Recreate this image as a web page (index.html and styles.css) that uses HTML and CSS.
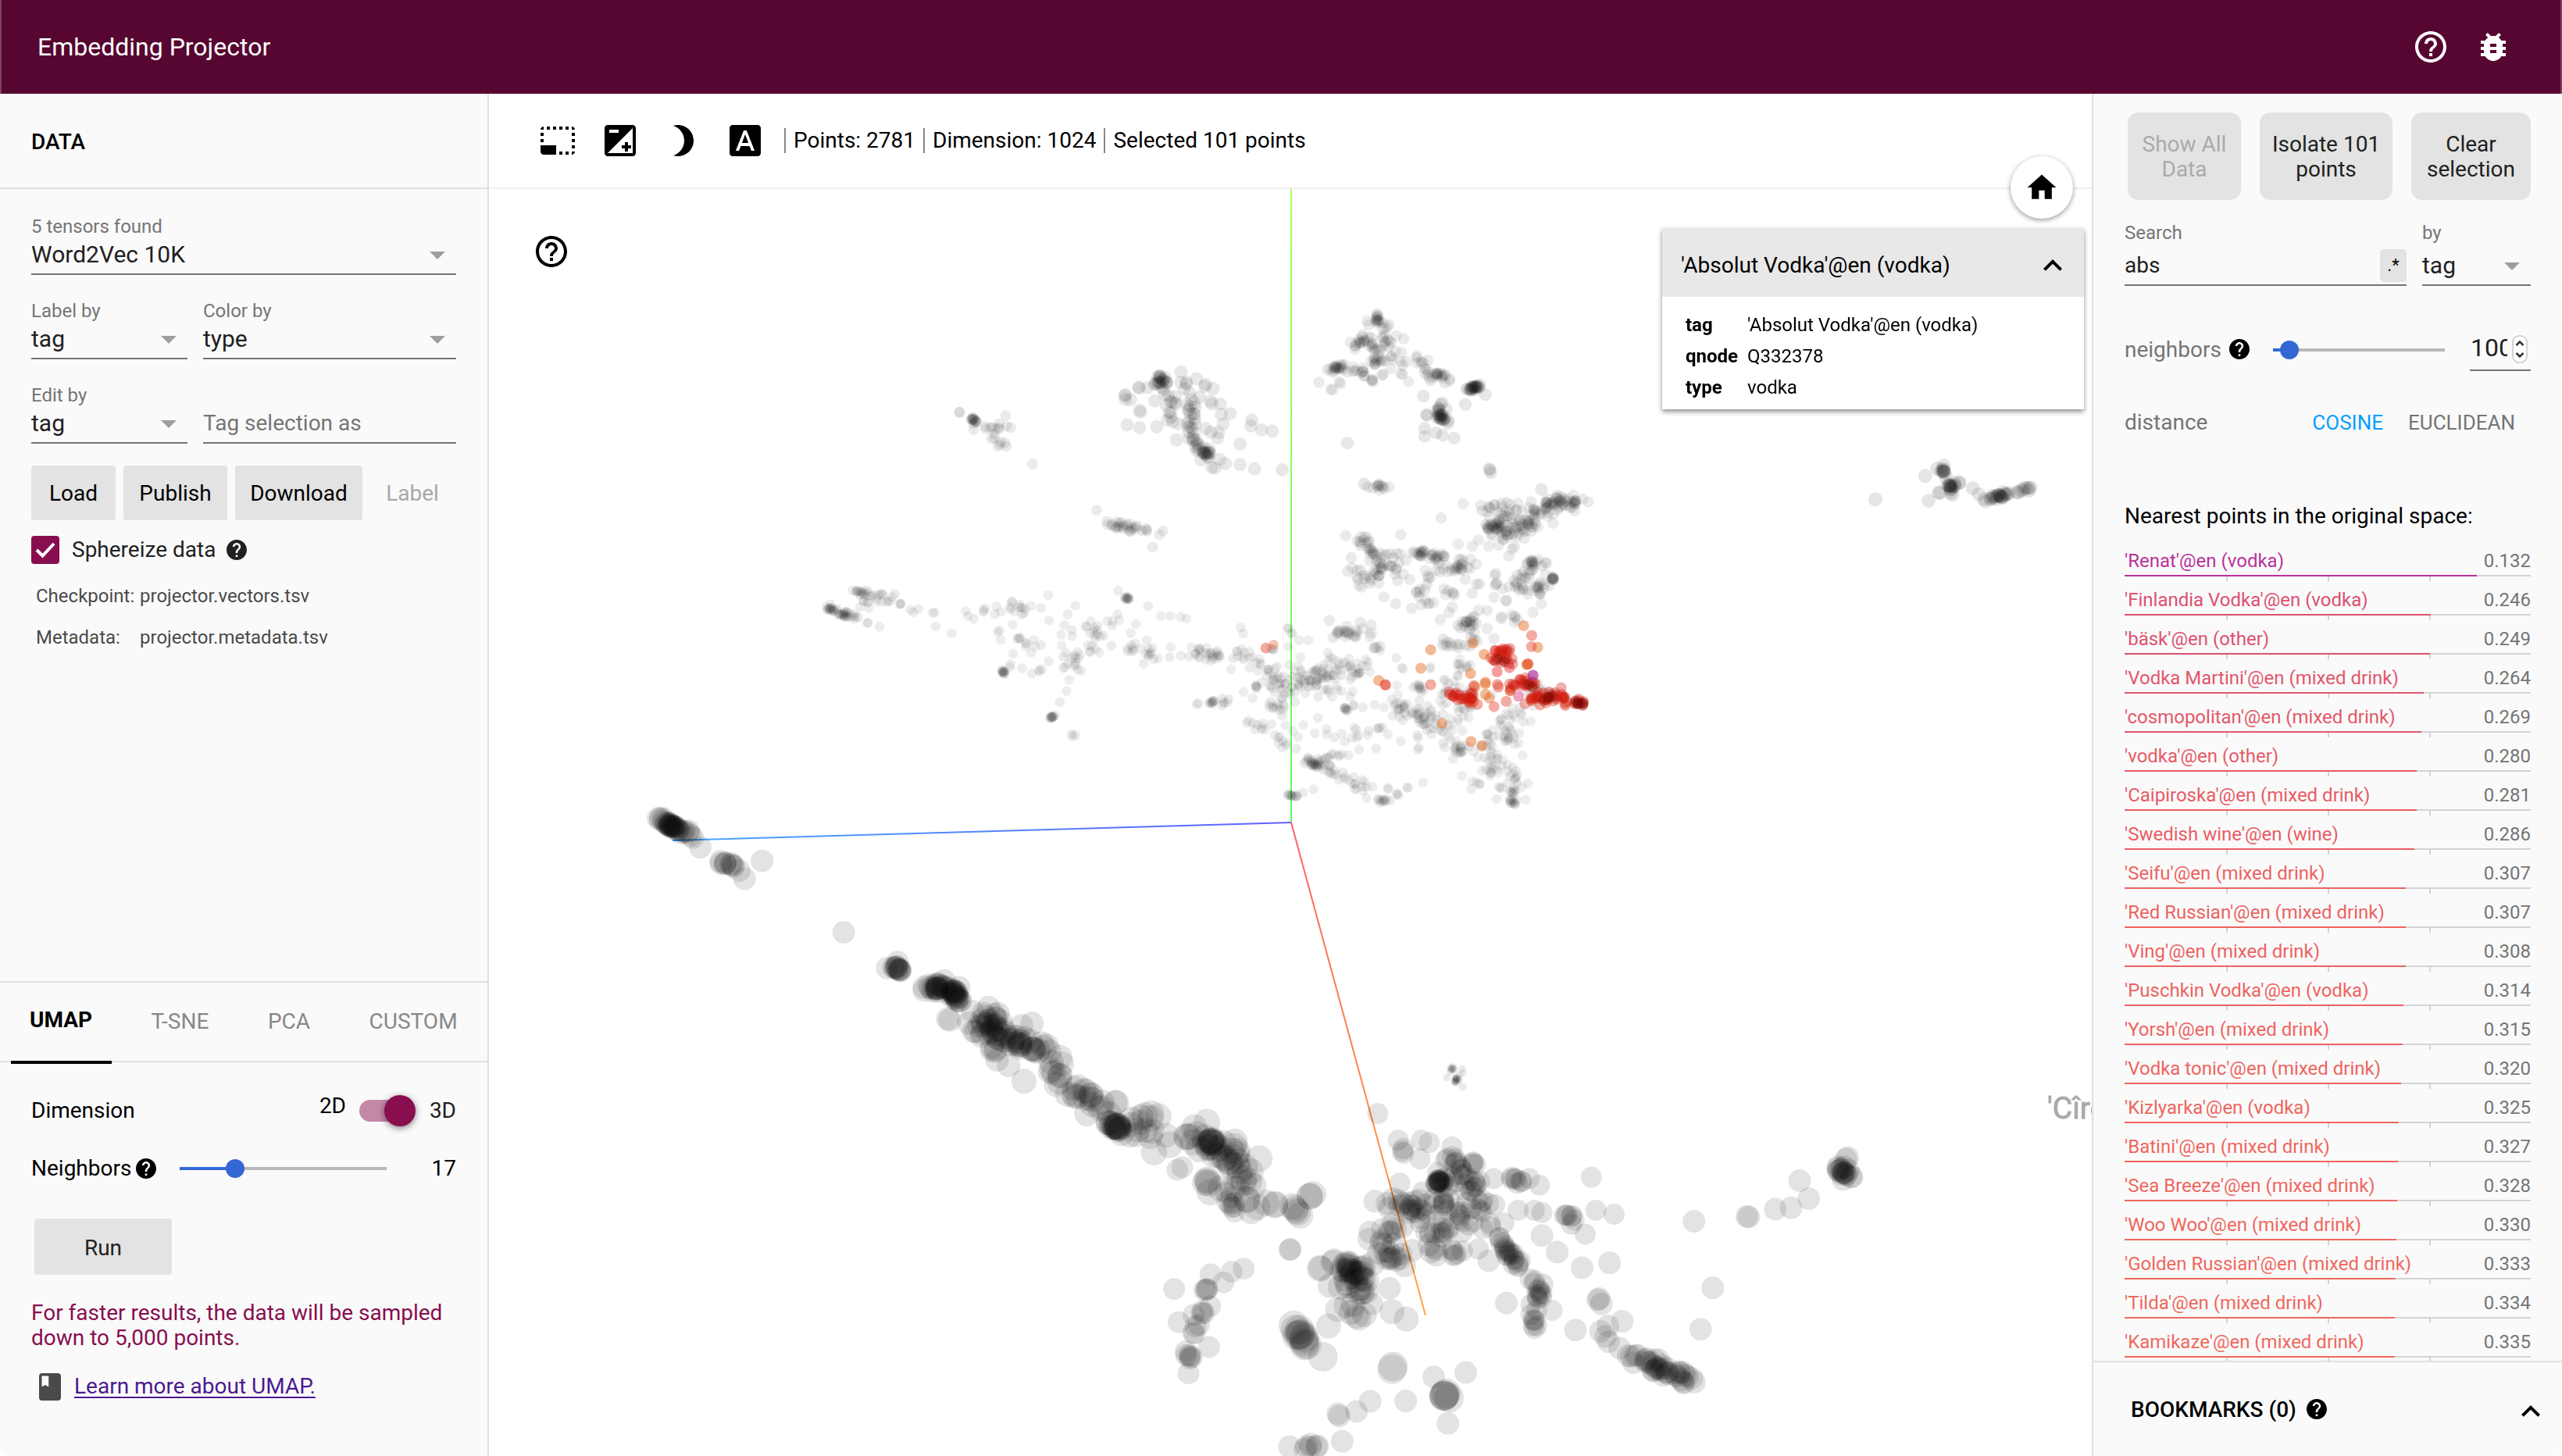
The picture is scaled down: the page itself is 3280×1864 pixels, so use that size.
FILE: index.html
```html
<!DOCTYPE html>
<html lang="en">
<head>
<meta charset="utf-8">
<title>Embedding Projector</title>
<link rel="stylesheet" href="styles.css">
</head>
<body>
<svg class="defs" aria-hidden="true">
  <symbol id="help-solid" viewBox="2 2 20 20"><path d="M12 2C6.48 2 2 6.48 2 12s4.48 10 10 10 10-4.48 10-10S17.52 2 12 2zm1 17h-2v-2h2v2zm2.07-7.75l-.9.92C13.45 12.9 13 13.5 13 15h-2v-.5c0-1.1.45-2.1 1.17-2.83l1.24-1.26c.37-.36.59-.86.59-1.41 0-1.1-.9-2-2-2s-2 .9-2 2H8c0-2.21 1.79-4 4-4s4 1.79 4 4c0 .88-.36 1.68-.93 2.25z"/></symbol>
  <symbol id="help-outline" viewBox="0 0 24 24"><path d="M11 18h2v-2h-2v2zm1-16C6.48 2 2 6.48 2 12s4.48 10 10 10 10-4.48 10-10S17.52 2 12 2zm0 18c-4.41 0-8-3.59-8-8s3.59-8 8-8 8 3.59 8 8-3.59 8-8 8zm0-14c-2.21 0-4 1.79-4 4h2c0-1.1.9-2 2-2s2 .9 2 2c0 2-3 1.75-3 5h2c0-2.25 3-2.5 3-5 0-2.21-1.79-4-4-4z"/></symbol>
  <symbol id="chevron-up" viewBox="0 0 24 24"><path d="M12 8l-6 6 1.41 1.41L12 10.83l4.59 4.58L18 14z"/></symbol>
</svg>

<header class="appbar">
  <h1 class="appbar-title">Embedding Projector</h1>
  <svg class="icon"><use href="#help-outline"/></svg>
  <svg class="icon" viewBox="0 0 24 24"><path d="M20 8h-2.81c-.45-.78-1.07-1.45-1.82-1.96L17 4.41 15.59 3l-2.17 2.17C12.96 5.06 12.49 5 12 5c-.49 0-.96.06-1.41.17L8.41 3 7 4.41l1.62 1.63C7.88 6.55 7.26 7.22 6.81 8H4v2h2.09c-.05.33-.09.66-.09 1v1H4v2h2v1c0 .34.04.67.09 1H4v2h2.81c1.04 1.79 2.97 3 5.19 3s4.15-1.21 5.19-3H20v-2h-2.09c.05-.33.09-.66.09-1v-1h2v-2h-2v-1c0-.34-.04-.67-.09-1H20V8zm-6 8h-4v-2h4v2zm0-4h-4v-2h4v2z"/></svg>
</header>

<main class="workspace">
  <aside class="left">
    <h2 class="pane-head">DATA</h2>
    <section class="data">
      <div class="field">
        <span class="field-label">5 tensors found</span>
        <span class="field-value">Word2Vec 10K<i class="arrow"></i></span>
      </div>
      <div class="field-row">
        <div class="field">
          <span class="field-label">Label by</span>
          <span class="field-value">tag<i class="arrow"></i></span>
        </div>
        <div class="field">
          <span class="field-label">Color by</span>
          <span class="field-value">type<i class="arrow"></i></span>
        </div>
      </div>
      <div class="field-row">
        <div class="field">
          <span class="field-label">Edit by</span>
          <span class="field-value">tag<i class="arrow"></i></span>
        </div>
        <div class="field">
          <span class="field-label"></span>
          <span class="field-value placeholder">Tag selection as</span>
        </div>
      </div>
      <div class="buttons">
        <button class="btn load">Load</button>
        <button class="btn publish">Publish</button>
        <button class="btn download">Download</button>
        <button class="btn flat">Label</button>
      </div>
      <div class="check">
        <span class="checkbox"><svg viewBox="0 0 36 36"><path d="M7 18l7.5 7.5L29 10"/></svg></span>
        <span>Sphereize data</span>
        <svg class="help"><use href="#help-solid"/></svg>
      </div>
      <dl class="files">
        <dt>Checkpoint:</dt><dd>projector.vectors.tsv</dd>
        <dt>Metadata:</dt><dd>projector.metadata.tsv</dd>
      </dl>
    </section>
    <section class="projections">
      <nav class="tabs">
        <span class="tab active">UMAP</span>
        <span class="tab">T-SNE</span>
        <span class="tab">PCA</span>
        <span class="tab">CUSTOM</span>
      </nav>
      <div class="umap">
        <div class="row dimension">
          <span class="grow">Dimension</span>
          <span class="two-d">2D</span>
          <span class="toggle"><i class="toggle-track"></i><i class="toggle-knob"></i></span>
          <span class="three-d">3D</span>
        </div>
        <div class="row neighbors">
          <span>Neighbors</span>
          <svg class="help"><use href="#help-solid"/></svg>
          <span class="slider"><i class="slider-fill"></i><i class="slider-knob"></i></span>
          <span class="count">17</span>
        </div>
        <button class="btn run">Run</button>
        <p class="notice">For faster results, the data will be sampled down to 5,000 points.</p>
        <p class="learn">
          <svg class="book" viewBox="4 2 16 20"><path d="M18 2H6c-1.100 0-2 .9-2 2v16c0 1.100.9 2 2 2h12c1.100 0 2-.9 2-2V4c0-1.100-.9-2-2-2zM6 4h5v8l-2.500-1.500L6 12V4z"/></svg>
          <a href="#umap">Learn more about UMAP.</a>
        </p>
      </div>
    </section>
  </aside>

  <section class="center">
    <div class="toolbar">
      <svg class="icon" viewBox="0 0 24 24"><path d="M23 15h-2v2h2v-2zm0-4h-2v2h2v-2zm0 8h-2v2c1 0 2-1 2-2zM15 3h-2v2h2V3zm8 4h-2v2h2V7zm-2-4v2h2c0-1-1-2-2-2zM3 21h8v-6H1v4c0 1.100.9 2 2 2zM3 7H1v2h2V7zm12 12h-2v2h2v-2zm4-16h-2v2h2V3zm0 16h-2v2h2v-2zM3 3C2 3 1 4 1 5h2V3zm0 8H1v2h2v-2zm8-8H9v2h2V3zM7 3H5v2h2V3z"/></svg>
      <svg class="icon" viewBox="0 0 24 24"><path d="M15 17v2h2v-2h2v-2h-2v-2h-2v2h-2v2h2zm5-15H4c-1.100 0-2 .9-2 2v16c0 1.100.9 2 2 2h16c1.100 0 2-.9 2-2V4c0-1.100-.9-2-2-2zM5 5h6v2H5V5zm15 15H4L20 4v16z"/></svg>
      <svg class="icon" viewBox="0 0 24 24"><path d="M9 2c-1.050 0-2.050.16-3 .46 4.060 1.270 7 5.060 7 9.540s-2.940 8.270-7 9.540c.95.3 1.950.46 3 .46 5.520 0 10-4.480 10-10S14.520 2 9 2z"/></svg>
      <svg class="icon" viewBox="0 0 24 24"><path d="M9.930 13.500h4.140L12 7.980zM20 2H4c-1.100 0-2 .9-2 2v16c0 1.100.9 2 2 2h16c1.100 0 2-.9 2-2V4c0-1.100-.9-2-2-2zm-4.050 16.500l-1.140-3H9.170l-1.120 3H5.960l5.110-13h1.860l5.110 13h-2.090z"/></svg>
      <span class="stat">Points: 2781</span>
      <span class="stat">Dimension: 1024</span>
      <span class="stat">Selected 101 points</span>
    </div>
    <div class="stage">
      <canvas id="scatter" width="2052" height="1622"></canvas>
      <span class="point-label">'Cîroc'@en (vodka)</span>
      <svg class="icon stage-help"><use href="#help-outline"/></svg>
      <div class="home"><svg viewBox="0 0 24 24"><path d="M10 20v-6h4v6h5v-8h3L12 3 2 12h3v8z"/></svg></div>
      <div class="card">
        <div class="card-head"><span>'Absolut Vodka'@en (vodka)</span><svg class="icon"><use href="#chevron-up"/></svg></div>
        <dl class="meta">
          <dt>tag</dt><dd>'Absolut Vodka'@en (vodka)</dd>
          <dt>qnode</dt><dd>Q332378</dd>
          <dt>type</dt><dd>vodka</dd>
        </dl>
      </div>
    </div>
  </section>

  <aside class="right">
    <div class="inspector">
      <div class="actions">
        <button class="action disabled">Show All<br>Data</button>
        <button class="action isolate">Isolate 101<br>points</button>
        <button class="action clear">Clear<br>selection</button>
      </div>
      <div class="search-row">
        <div class="field search">
          <span class="field-label">Search</span>
          <span class="field-value">abs<b class="regex">.*</b></span>
        </div>
        <div class="field by">
          <span class="field-label">by</span>
          <span class="field-value">tag<i class="arrow"></i></span>
        </div>
      </div>
      <div class="row nn">
        <span>neighbors</span>
        <svg class="help"><use href="#help-solid"/></svg>
        <span class="slider"><i class="slider-fill"></i><i class="slider-knob"></i></span>
        <span class="number"><span class="digits">100</span><svg class="spinner" viewBox="0 0 20 36"><rect x="1" y="1" width="18" height="34" rx="8"/><path d="M5.500 13l4.500-4.500 4.500 4.500M5.500 23l4.500 4.500 4.500-4.500"/></svg></span>
      </div>
      <div class="row distance">
        <span class="grow">distance</span>
        <span class="cosine">COSINE</span>
        <span class="euclid">EUCLIDEAN</span>
      </div>
      <h3 class="nearest">Nearest points in the original space:</h3>
      <div class="list" id="list"></div>
    </div>
    <div class="bookmarks">
      <span>BOOKMARKS (0)</span>
      <svg class="help"><use href="#help-solid"/></svg>
      <svg class="icon"><use href="#chevron-up"/></svg>
    </div>
  </aside>
</main>
<script src="script.js"></script>
</body>
</html>
```
FILE: styles.css
```css
* { box-sizing: border-box; }
body, h1, h2, h3, p, dl, dd { margin: 0; }
body {
  width: 3280px; height: 1864px; overflow: hidden;
  display: flex; flex-direction: column;
  font-family: Roboto, "Liberation Sans", sans-serif;
  font-size: 28px; line-height: 32px; color: #000; background: #fff;
}
button { font: inherit; border: 0; padding: 0; color: inherit; }
i { font-style: normal; }
.defs { position: absolute; width: 0; height: 0; }
.icon { width: 48px; height: 48px; fill: currentColor; flex: none; }
.help { width: 26px; height: 26px; flex: none; fill: currentColor; }
.grow { flex: 1; }
.row { display: flex; align-items: center; }

.appbar {
  height: 120px; flex: none; display: flex; align-items: center; gap: 32px;
  padding: 0 62px 0 46px; background: #560630; color: #fff;
  border: solid #7a4260; border-width: 0 2px;
}
.appbar-title { flex: 1; font-size: 32px; font-weight: 400; }
.workspace { flex: 1; min-height: 0; display: flex; }

.left { width: 626px; flex: none; display: flex; flex-direction: column; background: #fafafa; border-right: 2px solid #e0e0e0; border-bottom-left-radius: 10px; }
.pane-head { height: 122px; padding: 0 40px; line-height: 123px; font-size: 28px; font-weight: 500; border-bottom: 2px solid #e0e0e0; }
.data { flex: 1; padding: 32px 40px 0; }
.field { display: flex; flex-direction: column; height: 78px; border-bottom: 2px solid #737373; }
.field-label { height: 32px; font-size: 24px; line-height: 33px; color: #757575; }
.field-value { height: 40px; line-height: 38px; font-size: 30px; color: #212121; display: flex; align-items: center; }
.field-value.placeholder { font-size: 28px; color: #757575; }
.field-row { display: grid; grid-template-columns: 200px 324px; gap: 20px; margin-top: 30px; }
.arrow { margin: 2px 14px 0 auto; border: solid transparent; border-width: 10px 10px 0; border-top-color: #9e9e9e; }

.btn { background: #e3e3e3; border-radius: 4px; }
.buttons { display: flex; gap: 10px; height: 70px; margin-top: 28px; }
.buttons .btn { padding-top: 1px; }
.load { width: 108px; }
.publish { width: 133px; }
.download { width: 163px; }
.flat { width: 108px; background: none; color: #a8a8a8; }
.check { display: flex; align-items: center; height: 36px; margin-top: 20px; color: #212121; }
.check .help { margin-left: 14px; }
.checkbox { width: 36px; height: 36px; margin-right: 16px; border-radius: 4px; background: #880e4f; }
.checkbox svg { display: block; fill: none; stroke: #fff; stroke-width: 4; }
.files { display: grid; grid-template-columns: 133px auto; grid-auto-rows: 53px; margin: 14px 0 0 6px; font-size: 24px; line-height: 54px; color: #4a4a4a; }

.projections { height: 608px; border-top: 2px solid #e0e0e0; }
.tabs { display: flex; align-items: center; gap: 75.5px; height: 102px; padding-left: 38px; border-bottom: 2px solid #e0e0e0; }
.tab { color: #888; }
.tab.active { position: relative; margin-top: -4px; font-weight: 700; color: #000; }
.tab.active::after { content: ""; position: absolute; left: -24px; right: -25px; top: 68px; height: 4px; background: #000; }
.umap { padding: 26px 40px 0; }
.dimension { height: 72px; }
.two-d { padding-bottom: 12px; margin-right: 17px; }
.three-d { width: 52px; text-align: right; color: #212121; }
.toggle { position: relative; width: 72px; height: 40px; }
.toggle-track { position: absolute; left: 0; top: 6px; width: 64px; height: 28px; border-radius: 14px; background: #c489a7; }
.toggle-knob { position: absolute; right: 0; top: 0; width: 40px; height: 40px; border-radius: 50%; background: #880e4f; box-shadow: 0 2px 8px rgba(0,0,0,.5); }
.neighbors { height: 76px; margin-bottom: -2px; }
.neighbors .help { margin: 0 30px 0 6px; }
.slider { position: relative; height: 4px; background: #b9b9b9; }
.slider-fill { position: absolute; left: 0; top: 0; height: 4px; background: #3367d6; }
.slider-knob { position: absolute; top: -10px; width: 24px; height: 24px; border-radius: 50%; background: #3367d6; }
.neighbors .slider { width: 265px; }
.neighbors .slider-fill { width: 71px; }
.neighbors .slider-knob { left: 59px; }
.count { flex: 1; text-align: right; }
.run { display: block; width: 176px; height: 72px; margin: 28px 0 0 4px; padding-top: 3px; color: #212121; }
.notice { margin-top: 33px; color: #880e4f; }
.learn { display: flex; align-items: center; margin-top: 29px; padding-left: 10px; }
.learn a { color: #4b1a8f; text-underline-offset: 4px; text-decoration-thickness: 2px; margin: -2px 0 0 17px; }
.book { width: 28px; height: 35px; fill: #4a4a4a; }

.center { width: 2052px; flex: none; display: flex; flex-direction: column; background: #fff; }
.toolbar { height: 122px; display: flex; align-items: center; gap: 32px; padding-left: 64px; border-bottom: 2px solid #eee; }
.stat { height: 32px; padding-left: 10px; border-left: 2px solid #888; margin-right: -22px; }
.toolbar .icon + .stat { margin-left: -6px; }
/* The clip trims labels at the panel edges but leaves room for the home button above. */
.stage { position: relative; height: 1622px; clip-path: inset(-60px 0 0 0); }
.stage canvas { display: block; }
.point-label { position: absolute; left: 1995px; top: 1154px; font-size: 39px; line-height: 46px; white-space: nowrap; color: #aaa; -webkit-text-stroke: 1px #aaa; }
.stage-help { position: absolute; left: 56px; top: 56px; }
.home { position: absolute; left: 1948px; top: -42px; width: 80px; height: 80px; border-radius: 50%; background: #fff; box-shadow: 0 2px 6px rgba(0,0,0,.4); display: grid; place-items: center; }
.home svg { width: 44px; height: 44px; }
.card { position: absolute; left: 1502px; top: 50px; width: 540px; height: 232px; background: #fff; box-shadow: 0 3px 6px rgba(0,0,0,.45); }
.card-head { height: 88px; display: flex; align-items: center; justify-content: space-between; padding: 7px 16px 0 24px; background: #e8e8e8; }
.meta { display: grid; grid-template-columns: 79px auto; grid-auto-rows: 40px; padding: 16px 0 0 30px; font-size: 24px; line-height: 40px; }
.meta dt { font-weight: 700; }

.right { flex: 1; min-width: 0; display: flex; flex-direction: column; background: #fafafa; border-left: 2px solid #e0e0e0; border-bottom-right-radius: 10px; }
.inspector { height: 1622px; padding: 24px 40px 0; overflow: hidden; }
.actions { display: flex; justify-content: flex-end; gap: 24px; height: 112px; }
.action { width: 145px; border-radius: 14px; background: #e3e3e3; color: #212121; padding-top: 2px; }
.isolate { width: 170px; }
.clear { width: 153px; }
.disabled { color: #aaa; }
.search-row { display: flex; gap: 20px; margin-top: 26px; }
.search-row .field { height: 84px; }
.search-row .field-value { height: 50px; line-height: 52px; padding-top: 2px; }
.search { width: 361px; }
.search .field-value { font-size: 28px; }
.by { width: 139px; }
.regex { margin: 0 0 0 auto; width: 34px; height: 42px; line-height: 41px; border-radius: 5px; background: #e3e3e3; font-size: 22px; font-weight: 400; text-align: center; color: #000; }
.nn { height: 60px; margin-top: 52px; color: #757575; }
.nn .help { margin: -2px 30px 0 10px; color: #000; }
.nn .slider { width: 220px; }
.nn .slider-fill { width: 21px; }
.nn .slider-knob { left: 9px; }
.number { width: 78px; height: 60px; margin: -7px 0 0 auto; border-bottom: 2px solid #737373; display: flex; align-items: center; font-size: 32px; color: #212121; }
.nn .number { transform: translateY(0); }
.digits { width: 48px; overflow: hidden; }
.spinner { width: 20px; height: 36px; margin: 8px 0 0 6px; fill: #fff; stroke: #c8c8c8; stroke-width: 1.500px; }
.spinner path { fill: none; stroke: #333; stroke-width: 2.500px; }
.distance { height: 60px; margin-top: 33px; color: #757575; font-size: 28px; }
.cosine { font-size: 26px; color: #039eff; }
.euclid { font-size: 26px; margin: 0 20px 0 32px; }
.nearest { margin: 74px 0 17px; font-size: 28px; font-weight: 400; }
.nn-row { height: 50px; font-size: 24px; }
.nn-text { display: flex; justify-content: space-between; height: 42px; line-height: 48px; }
.nn-dist { color: #757575; }
.nn-bar { height: 2px; background: #d3d3d3; }
.nn-fill { height: 2px; }
.nn-ticks { display: grid; grid-template-columns: repeat(4, 130px); height: 6px; }
.nn-ticks i + i { border-left: 2px solid #d3d3d3; }
.bookmarks { height: 122px; display: flex; align-items: center; border-top: 2px solid #e0e0e0; padding: 1px 16px 0 48px; font-weight: 500; }
.bookmarks .help { margin: -2px auto 0 13px; }
.bookmarks .icon { margin-top: 4px; }
.nn .number { align-self: flex-start; height: 57px; margin-top: 0; padding-top: 0; }
.nn .digits { padding: 0 0 2px 1px; }
.nn .spinner { margin-top: 2px; }
```
FILE: script.js
```js
// Nearest neighbours: label, distance, colour
const neighbors = [
  ["'Renat'@en (vodka)", "0.132", "#b8329a"],
  ["'Finlandia Vodka'@en (vodka)", "0.246", "#dc5070"],
  ["'bäsk'@en (other)", "0.249", "#dd516f"],
  ["'Vodka Martini'@en (mixed drink)", "0.264", "#e2566a"],
  ["'cosmopolitan'@en (mixed drink)", "0.269", "#e45868"],
  ["'vodka'@en (other)", "0.280", "#e75b66"],
  ["'Caipiroska'@en (mixed drink)", "0.281", "#e75b65"],
  ["'Swedish wine'@en (wine)", "0.286", "#e95d64"],
  ["'Seifu'@en (mixed drink)", "0.307", "#ed6260"],
  ["'Red Russian'@en (mixed drink)", "0.307", "#ed6260"],
  ["'Ving'@en (mixed drink)", "0.308", "#ed6260"],
  ["'Puschkin Vodka'@en (vodka)", "0.314", "#ee635f"],
  ["'Yorsh'@en (mixed drink)", "0.315", "#ee635f"],
  ["'Vodka tonic'@en (mixed drink)", "0.320", "#ee645e"],
  ["'Kizlyarka'@en (vodka)", "0.325", "#ef655e"],
  ["'Batini'@en (mixed drink)", "0.327", "#ef665e"],
  ["'Sea Breeze'@en (mixed drink)", "0.328", "#ef665e"],
  ["'Woo Woo'@en (mixed drink)", "0.330", "#ef675d"],
  ["'Golden Russian'@en (mixed drink)", "0.333", "#ef685d"],
  ["'Tilda'@en (mixed drink)", "0.334", "#ef685d"],
  ["'Kamikaze'@en (mixed drink)", "0.335", "#ef685d"]
];
document.getElementById("list").innerHTML = neighbors.map(([name, d, color]) =>
  `<div class="nn-row"><div class="nn-text"><span style="color:${color}">${name}</span><span class="nn-dist">${d}</span></div>` +
  `<div class="nn-bar"><div class="nn-fill" style="width:${((1 - d) * 100).toFixed(1)}%;background:${color}"></div></div>` +
  `<div class="nn-ticks"><i></i><i></i><i></i><i></i></div></div>`).join("");

// Scatter plot
const ctx = document.getElementById("scatter").getContext("2d");
ctx.translate(-626, -242);
let seed = 7;
const rand = () => ((seed = (seed * 16807) % 2147483647) / 2147483647);
const gauss = () => (rand() + rand() + rand() + rand() - 2) * 1.7;

function dot(x, y, r) {
  ctx.beginPath();
  ctx.arc(x, y, r, 0, Math.PI * 2);
  ctx.fill();
}

function axis(x1, y1, x2, y2, from, to) {
  const g = ctx.createLinearGradient(x1, y1, x2, y2);
  g.addColorStop(0, from);
  g.addColorStop(1, to);
  ctx.strokeStyle = g;
  ctx.lineWidth = 2;
  ctx.beginPath();
  ctx.moveTo(x1, y1);
  ctx.lineTo(x2, y2);
  ctx.stroke();
}

// Each patch has its own origin and units per pixel.
// runs: [x1, y1, x2, y2, jitter px, count]; dots: [x, y, count]
function patch(ox, oy, sx, sy, groups) {
  for (const g of groups) {
    ctx.fillStyle = g.color || `rgba(0,0,0,${g.a || 0.11})`;
    for (const [x1, y1, x2, y2, j, n] of g.runs || []) {
      for (let i = 0; i < n; i++) {
        const t = (i + rand()) / n;
        dot(ox + (x1 + (x2 - x1) * t) / sx + gauss() * j, oy + (y1 + (y2 - y1) * t) / sy + gauss() * j, g.r);
      }
    }
    for (const [x, y, n = 1] of g.dots || []) {
      for (let i = 0; i < n; i++) {
        const j = n > 1 ? 1.5 : 0;
        dot(ox + x / sx + gauss() * j, oy + y / sy + gauss() * j, g.r);
      }
    }
  }
}

axis(1653, 242, 1653, 1053, "#a8ff58", "#5bff5b");
axis(1653, 1053, 861, 1076, "#6060ff", "#48a8ff");
axis(1653, 1053, 1825, 1684, "#ff6060", "#ffa63c");

patch(800, 360, 1.742, 2.24, [
  { r: 7, a: 0.08, runs: [
    [745,374,746,378,1,2],[772,392,785,405,1.5,14],[810,420,860,410,4,9],[800,420,850,476,3,10],
    [1085,698,1120,705,2.5,16],[1120,705,1160,718,3,12]],
    dots: [[778,425],[909,524],[1052,657],[1075,688],[1200,716],[1192,727],[1177,762]] },
  { r: 8.5, a: 0.09, runs: [
    [1193,282,1202,298,2.5,11],[1178,265,1215,320,4,13],[1118,325,1120,340,2.5,4],[1262,325,1265,390,4,14],
    [1225,340,1210,400,6,12],[1265,390,1262,460,4,11],[1265,455,1300,500,5,15],[1294,488,1300,500,3,9],
    [1300,440,1325,460,5,4],[1300,505,1332,542,4,5]],
    dots: [[1147,307],[1146,304],[1165,305],[1148,370],[1150,375],[1182,343],[1120,412],[1148,420],[1186,418],[1240,260],
    [1252,288,2],[1275,280],[1292,300,2],[1312,308],[1328,352],[1305,348,2],[1350,380],[1330,382],[1334,410],[1398,398],
    [1396,415],[1420,426],[1444,430],[1372,467],[1372,526],[1404,538],[1466,541],[1230,455],[1240,290]] },
  { r: 6.3, a: 0.07, runs: [
    [455,935,457,940,2,11],[458,940,520,970,2,22],[488,952,492,958,2,9],[515,888,540,898,3,14],[540,900,595,905,4,16],
    [530,905,540,945,4,6],[865,920,895,965,5,12],[870,1012,920,1042,4,10],[1035,978,1065,1018,4,12],[1070,985,1110,968,4,5],
    [1035,1050,1055,1048,4,7],[985,1076,1018,1078,3,9],[980,1105,1000,1110,4,6],[1125,1045,1190,1070,5,18],
    [1268,1066,1330,1075,4,26],[1345,1070,1390,1075,5,10],[1325,1215,1350,1195,3,6],[1395,1090,1460,1120,6,14],
    [1440,1130,1480,1200,8,26],[1385,1258,1440,1275,5,10],[1445,1205,1475,1250,6,14],[1450,1312,1475,1322,4,8]],
    dots: [[540,978,2],[568,991],[615,922,3],[640,945,2],[655,940],[688,946,2],[693,990],[729,1009],[760,946],[765,960],
    [778,968],[801,943,3],[828,933],[825,955],[838,948],[905,932],[928,937],[944,900],[1005,930],[988,955],[946,973],
    [834,1000,2],[838,1028],[865,985],[866,1068],[844,1120,11],[858,1104,2],[886,1110],[925,1117,3],[908,1125],[945,1090],
    [906,1065],[973,1014],[980,986],[997,1000],[997,1018],[974,1045],[1100,887],[1119,910,11],[1167,932],[1195,960],
    [1217,960],[1240,963],[1252,967],[1140,983],[1128,1009],[1085,1045],[1018,1116],[991,1143],[985,1175],[970,1207],
    [953,1248,11],[1001,1300,3],[1217,1049],[1215,1078],[1157,1097],[1240,1074],[1258,1076],[1352,1113],[1373,993],
    [1379,1010],[1310,1206,9],[1280,1210,2],[1407,1163,5],[1380,1178],[1400,1195],[1420,1150],[1480,995],[1485,1010],[1443,1055,4]] }
]);

patch(1600, 360, 3, 2.24, [
  { r: 7.3, a: 0.08, runs: [
    [478,98,492,108,2.5,9],[450,110,540,130,5,11],[400,180,455,168,4,17],[490,160,560,190,6,18],[465,230,515,222,3,14],
    [460,190,520,205,6,8],[300,252,365,248,3,14],[328,245,345,248,2,6],[365,250,430,255,5,8],[425,265,445,270,3,5],
    [470,285,485,290,3,4],[530,240,600,240,4,5],[640,225,700,245,4,9],[660,265,760,268,3,10],[710,263,740,268,2,9],
    [468,588,508,592,2,9],[510,592,535,594,2,3],[1150,632,1265,640,4,40],[1090,660,1170,645,6,25],[930,710,1110,690,7,52],
    [900,650,960,650,4,10],[905,705,945,703,2.5,12],[940,690,1060,650,7,20],[965,725,1010,740,6,12],[410,742,470,760,3,13],
    [460,775,475,782,2,7],[475,790,560,828,6,22],[380,815,440,850,6,8],[435,855,510,835,5,15],[530,770,565,780,4,4],
    [630,785,670,780,3,15],[700,788,745,785,2.5,15],[725,820,800,835,5,10],[790,810,850,815,5,15],[635,893,665,890,3,6],
    [675,920,690,925,3,4],[730,888,790,910,5,6],[1060,805,1130,825,4,14],[1000,880,1060,840,6,15],[1060,870,1130,885,7,20],
    [810,985,870,975,4,16],[1010,965,1040,968,3,5],[335,1012,410,1002,4,18],[440,1003,475,1000,4,4],[480,1040,500,1060,3,4],
    [740,1040,770,1035,3,5],[770,1045,830,1040,4,6],[845,1025,865,1035,4,6]],
    dots: [[510,267,2],[585,268,2],[610,288],[583,205],[265,290],[312,310],[318,312],[342,296,2],[770,288,2],[750,292],
    [695,285],[1010,765,2],[995,788],[1165,694],[1300,633],[1000,640],[1030,636],[967,637],[819,638],
    [735,679],[580,727],[369,730],[800,754],[855,760],[878,742],[918,760],[430,877],[600,800],[870,812],[828,855],[615,855],
    [590,840],[568,858],[675,830],[690,850,3],[680,870],[706,922],[515,905],[560,925],[622,938],[778,935],[765,950],
    [732,970],[880,865,2],[855,895],[938,840,2],[950,870,3],[1088,806,6],[1165,853,10],[938,907],[985,915,2],[1120,925],
    [1088,950],[880,944],[912,944],[912,996],[845,975,4],[968,965,2],[306,973],[320,1022],[425,978],[938,1025]] },
  { r: 8.2, a: 0.095, runs: [
    [842,312,885,300,1.6,24],[715,365,745,360,3,7],[722,380,740,392,2.2,17],[740,395,765,405,3,4]],
    dots: [[905,325],[828,354],[667,330],[680,382,2],[672,422],[672,445],[715,435],[740,442],[785,450],[375,464],[928,542,2],[920,538],[440,582],[1120,597]] },
  { r: 6.3, a: 0.07, runs: [
    [165,1130,300,1125,7,36],[290,1125,440,1100,8,34],[405,1130,435,1132,3,6],[160,1150,350,1165,8,22],
    [540,1210,600,1240,7,20],[630,1230,700,1280,7,35],[700,1270,790,1300,8,14],[640,1165,675,1165,4,11],
    [790,1090,850,1100,5,10],[740,1160,780,1200,8,10],[770,1220,900,1200,10,22],[370,1308,410,1310,4,5],
    [200,1375,300,1370,4,12],[225,1380,265,1388,2.5,16],[265,1390,330,1415,4,14],[290,1362,365,1352,4,8],
    [350,1420,460,1465,4,18],[145,1475,185,1472,1.5,11],[495,1488,530,1486,2,11],[780,1330,830,1345,4,13],
    [840,1440,890,1435,4,5],[900,1410,935,1412,3,7],[900,1360,990,1385,8,20],[900,1330,950,1340,6,8],[940,1275,1000,1285,6,13],
    [985,1290,1005,1330,4,12],[990,1235,1060,1245,6,10],[1010,1400,1020,1440,3,7],[1000,1455,1015,1465,3,9],
    [1000,1490,1022,1497,2,12],[1080,1150,1160,1180,6,14]],
    dots: [[145,995],[165,1010],[190,1030],[225,1030],[148,1048],[195,1078],[300,1065],[310,1078],[690,1110,2],[590,1115,2],
    [563,1080],[500,1060],[565,1158],[800,1135,2],[745,1145,2],[370,1225,8],[395,1215,2],[435,1222],[395,1185,2],
    [262,1192],[316,1192],[262,1252],[206,1273],[250,1296],[295,1285],[296,1300],[326,1308],[405,1284,2],[455,1298,2],
    [495,1282,3],[510,1280],[530,1300],[420,1343],[485,1340],[580,1320],[480,1215],[515,1222],[178,1340],[186,1307],
    [165,1290],[245,1457],[205,1466],[565,1472,3],[530,1450,2],[608,1450,2],[665,1438],[648,1337,2],[648,1305,2],
    [748,1337],[810,1352,4],[780,1370],[815,1418],[915,1295,3],[1080,1262],[1035,1296],[1048,1360],[965,1450,3],
    [948,1485],[1060,1487],[1068,1440],[1045,1450]] },
  { r: 7, color: "rgba(226,100,25,.45)", dots: [[1052,988],[1106,1050],[1070,1098,2],[900,1070],[657,1110],[695,1057],
    [848,1125],[857,1038],[738,1267],[850,1320],[892,1332],[495,1145],[905,1150],[905,1155],[920,1195],[905,1185],[865,1163],[1080,1200],[1210,1212],[1000,1175]] },
  { r: 6.3, color: "rgba(235,110,50,.4)", dots: [[92,1042]] },
  { r: 7, color: "rgba(228,60,40,.43)", runs: [[840,1200,870,1200,4,5]], dots: [[1083,1016],[1082,1048],[695,1157],[520,1157],
    [62,1052],[522,1158],[938,1220],[985,1205],[860,1160],[952,1160,2],[1070,1097],[925,1080],[1115,1215]] },
  { r: 7, color: "rgba(240,60,70,.5)", dots: [[950,1120],[997,1108],[945,1060]] },
  { r: 7, color: "rgba(208,25,15,.34)", runs: [[945,1060,1000,1050,4,10],[935,1080,1005,1085,4,14],[780,1175,792,1195,3,9],
    [810,1202,860,1190,3.5,13],[990,1162,1020,1160,3,6],[1050,1145,1085,1165,4,16],[1075,1195,1190,1195,4.5,30],
    [1190,1185,1215,1210,3,7],[1240,1207,1285,1210,1.8,9]] },
  { r: 7, color: "rgba(110,5,0,.3)", runs: [[1250,1209,1285,1211,1,6],[1130,1198,1165,1193,1.5,4],[955,1078,980,1082,2,2],[1065,1158,1080,1162,1,2]] },
  { r: 7, color: "rgba(215,50,110,.45)", dots: [[1032,1190]] },
  { r: 7, color: "rgba(178,50,160,.7)", dots: [[1088,1130]] }
]);

patch(800, 1000, 1.742, 1.8148, [
  { r: 14.5, runs: [[76,84,125,120,1.2,20],[98,98,112,108,1.2,10],[130,110,148,132,2,6],[213,184,240,200,2,9],[602,432,615,440,1.5,12]],
    dots: [[168,154],[255,208],[267,227],[306,185],[488,351],[585,434],[608,420]] },
  { r: 15, runs: [[670,478,720,480,3,14],[690,475,702,480,2,8],[725,490,745,510,3,22],[790,530,830,560,7,12],[770,570,800,590,5,6],
    [800,560,830,590,5,14],[820,620,850,640,8,5]],
    dots: [[712,464],[745,480],[725,555],[720,552],[885,568],[908,563],[830,648]] },
  { r: 16, runs: [[830,580,900,625,6,24],[900,620,940,630,5,8],[945,660,985,675,6,9],[990,710,1040,740,5,10],[1040,745,1070,760,5,6],
    [1075,785,1110,810,4,9],[1110,805,1190,830,6,11]],
    dots: [[890,697],[940,615],[962,705],[1010,710],[1030,773],[1095,748,2]] },
  { r: 17, runs: [[1090,803,1102,806,1.5,9],[1150,775,1195,795,5,5],[1255,840,1330,850,7,16],[1290,840,1315,845,3,7],[1330,860,1395,900,7,16],
    [1295,925,1305,935,2,4],[1330,935,1400,930,7,8],[1390,975,1415,985,4,4],[1485,990,1510,1005,3,5]],
    dots: [[1180,862],[1215,845],[1298,792],[1270,805],[1360,838],[1415,877],[1305,955],[1452,986,2],[1430,980],[1528,965,2],[1535,960],[1550,1132],[1360,875]] },
  { r: 14, runs: [[1345,960,1358,995,3,7],[1253,1328,1260,1335,2,5]],
    dots: [[1232,903],[1243,897],[1360,1000],[1484,1088],[1306,1146],[1353,1140],[1380,1133],[1335,1165],[1225,1180],[1297,1181,4],[1305,1220],
    [1287,1234,3],[1268,1240],[1235,1257],[1275,1265,2],[1268,1278,2],[1303,1315],[1257,1376],[1260,1342]] }
]);

patch(1600, 1340, 1.537, 2.992, [
  { r: 5, a: 0.08, dots: [[398,86,8],[407,127,13],[418,97,2],[388,118],[419,153],[412,110]] },
  { r: 13.5, runs: [[385,430,420,450,4,9],[367,512,380,522,2,15],[360,490,400,560,8,9],[420,480,450,530,7,10],[430,520,450,540,5,5],
    [330,600,410,650,10,26],[350,690,410,700,9,14],[440,600,460,720,9,13],[395,770,405,790,5,6],[490,740,515,800,3,13],
    [515,800,530,850,4,9],[555,880,570,950,4,7],[560,940,570,1000,6,8],[555,1040,560,1075,3,7],[515,505,530,515,3,7],
    [615,640,640,660,4,6]],
    dots: [[252,256],[292,358],[302,390],[300,400],[303,408],[338,358],[353,367],[398,384],[335,430],[442,445,4],
    [295,523],[470,600],[482,605],[480,505],[550,505],[570,530],[672,500],[528,627],[560,627],[575,635],[633,680],[660,718],
    [681,627],[717,642],[500,675],[450,775],[595,1010]] },
  { r: 14.5, runs: [[280,600,330,610,6,14],[235,730,300,720,7,12],[260,790,300,820,6,11],[340,770,370,780,5,5],
    [750,1180,810,1210,4,11],[790,1225,860,1270,4,26]],
    dots: [[246,592],[270,600],[300,690],[305,840],[320,780],[470,820],[575,723],[605,787],[654,847],[708,828],[911,924],
    [874,669],[980,655,2],[1034,622],[1065,617],[1100,582],[1082,513],[505,982],[79,777],[641,1085],[887,1082],[685,970,2],[692,985],
    [733,1052],[705,1070],[690,1090],[700,1110],[706,1130],[728,1155],[755,1210],[875,1285],[870,1270],[362,1265],[425,1248],
    [390,1443],[307,1357],[237,1358],[210,1397],[175,1414,2],[182,1512],[78,1532],[240,985],[275,925],[1175,430,2]] },
  { r: 14.5, runs: [[1155,460,1185,500,4,11],[1160,475,1172,487,2.5,7],[105,1530,135,1535,3,6]] },
  { r: 16, runs: [[168,820,230,850,7,14],[190,850,215,880,5,14],[175,900,240,920,8,10],[190,960,220,1010,7,8]],
    dots: [[215,1040],[140,848],[280,1015],[308,1043],[155,1070,1]] },
  { r: 19, runs: [[90,1075,104,1125,2,9],[108,1130,114,1145,2,3]],
    dots: [[144,1188],[282,1225],[280,1235],[385,1338,5],[392,1345]] }
]);

patch(2380, 560, 3, 3, [
  { r: 9, a: 0.1, runs: [[315,124,325,132,1.2,8],[345,183,365,190,2.5,14],[505,236,572,220,1.8,20],[612,208,655,195,2,9]],
    dots: [[63,238],[254,148],[267,243],[325,108],[300,120],[335,155],[390,175,2],[310,215,2],[350,215,2],[437,195],[460,218],[485,242,2],[555,210]] }
]);
```
